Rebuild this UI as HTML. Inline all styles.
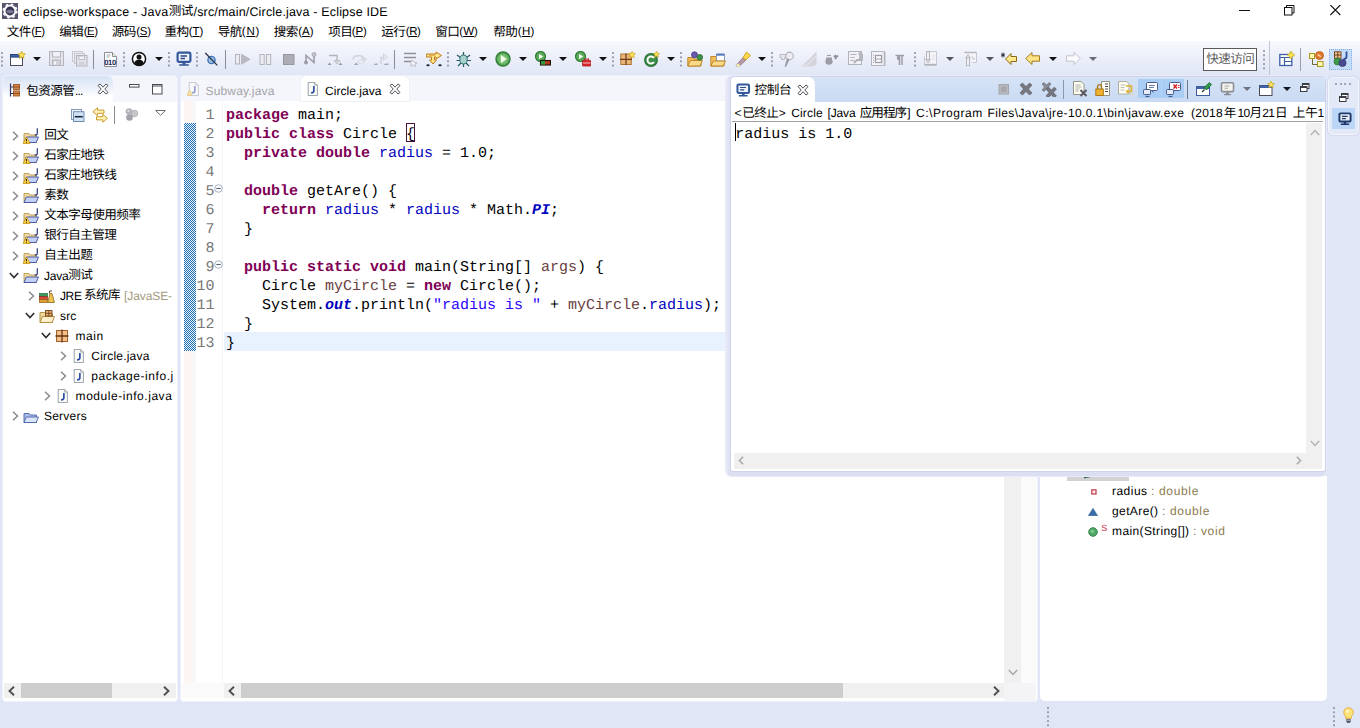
<!DOCTYPE html>
<html lang="zh"><head><meta charset="utf-8"><title>eclipse-workspace - Java测试/src/main/Circle.java - Eclipse IDE</title>
<style>
html,body{margin:0;padding:0}
body{width:1360px;height:728px;overflow:hidden;position:relative;background:#e1e6f6;font-family:"Liberation Sans",sans-serif;font-size:12px;text-rendering:geometricPrecision;-webkit-font-smoothing:antialiased}
.a{position:absolute;display:block;white-space:pre}
.s{font-family:"Liberation Sans",sans-serif}
.m{font-family:"Liberation Mono",monospace}
.k{font-family:"Liberation Sans","Noto Sans CJK SC",sans-serif;font-size:12.6px;line-height:12px;letter-spacing:-0.6px;color:#000}
u{text-decoration:underline}
</style></head>
<body>
<div class="a" style="left:0px;top:0px;width:1360px;height:41px;background:#fff;"></div>
<svg class="a" style="left:2px;top:3px;" width="16" height="16" viewBox="0 0 16 16"><rect x="0" y="0" width="16" height="16" fill="#57556e"/><circle cx="8" cy="8" r="6.5" fill="#f6f6fb" stroke="#f6f6fb" stroke-width="2.2" stroke-dasharray="2.5 2.6"/><circle cx="8" cy="8" r="4.4" fill="#34324c"/><ellipse cx="8" cy="8.6" rx="3.4" ry="2" fill="#6e6c88"/><path d="M4.600 8.600h6.800" stroke="#8c8aa4" stroke-width="0.700"/></svg>
<span class="a s" style="left:23px;top:5px;font-size:12.5px;line-height:14px;color:#000;letter-spacing:0.207px;">eclipse-workspace - Java</span>
<span class="a k" style="left:168.70px;top:4.70px;">测试</span>
<span class="a s" style="left:193.5px;top:5px;font-size:12.5px;line-height:14px;color:#000;letter-spacing:0.173px;">/src/main/Circle.java - Eclipse IDE</span>
<svg class="a" style="left:1238.5px;top:10px;" width="12" height="2" viewBox="0 0 12 2"><path d="M0 0.500h11" stroke="#111" stroke-width="1"/></svg>
<svg class="a" style="left:1284px;top:5px;" width="11" height="11" viewBox="0 0 11 11"><path d="M2.500 2.500v-2h7.500v7.500h-2" fill="none" stroke="#111"/><rect x="0.500" y="2.500" width="7.500" height="7.500" fill="none" stroke="#111"/></svg>
<svg class="a" style="left:1330px;top:5px;" width="11" height="11" viewBox="0 0 11 11"><path d="M0.300 0l10 10M10.300 0l-10 10" stroke="#111" stroke-width="1.100"/></svg>
<span class="a k" style="left:6.70px;top:26.00px;">文件</span>
<span class="a s" style="left:31.3px;top:26px;font-size:11.5px;line-height:12px;color:#000;letter-spacing:-0.496px;">(<u>F</u>)</span>
<span class="a k" style="left:59.20px;top:26.00px;">编辑</span>
<span class="a s" style="left:83.8px;top:26px;font-size:11.5px;line-height:12px;color:#000;letter-spacing:-0.548px;">(<u>E</u>)</span>
<span class="a k" style="left:111.70px;top:26.00px;">源码</span>
<span class="a s" style="left:136.3px;top:26px;font-size:11.5px;line-height:12px;color:#000;letter-spacing:-0.281px;">(<u>S</u>)</span>
<span class="a k" style="left:164.40px;top:26.00px;">重构</span>
<span class="a s" style="left:188.70000000000002px;top:26px;font-size:11.5px;line-height:12px;color:#000;letter-spacing:-0.029px;">(<u>T</u>)</span>
<span class="a k" style="left:217.70px;top:26.00px;">导航</span>
<span class="a s" style="left:241.8px;top:26px;font-size:11.5px;line-height:12px;color:#000;letter-spacing:0.744px;">(<u>N</u>)</span>
<span class="a k" style="left:273.70px;top:26.00px;">搜索</span>
<span class="a s" style="left:298.3px;top:26px;font-size:11.5px;line-height:12px;color:#000;letter-spacing:-0.048px;">(<u>A</u>)</span>
<span class="a k" style="left:328.20px;top:26.00px;">项目</span>
<span class="a s" style="left:351.8px;top:26px;font-size:11.5px;line-height:12px;color:#000;letter-spacing:-0.215px;">(<u>P</u>)</span>
<span class="a k" style="left:381.20px;top:26.00px;">运行</span>
<span class="a s" style="left:405.8px;top:26px;font-size:11.5px;line-height:12px;color:#000;letter-spacing:-0.423px;">(<u>R</u>)</span>
<span class="a k" style="left:435.20px;top:26.00px;">窗口</span>
<span class="a s" style="left:459.3px;top:26px;font-size:11.5px;line-height:12px;color:#000;letter-spacing:0.061px;">(<u>W</u>)</span>
<span class="a k" style="left:493.20px;top:26.00px;">帮助</span>
<span class="a s" style="left:517.8px;top:26px;font-size:11.5px;line-height:12px;color:#000;letter-spacing:0.244px;">(<u>H</u>)</span>
<div class="a" style="left:0px;top:41px;width:1360px;height:35px;background:linear-gradient(#f7f8fd 0%,#eef1fa 40%,#e3e8f7 85%,#e1e6f6 100%);"></div>
<svg class="a" style="left:1px;top:52px;" width="2" height="17" viewBox="0 0 2 17"><rect x="0" y="0.00" width="2" height="2" rx="0.5" fill="#989cae"/><rect x="0" y="4.15" width="2" height="2" rx="0.5" fill="#989cae"/><rect x="0" y="8.30" width="2" height="2" rx="0.5" fill="#989cae"/><rect x="0" y="12.45" width="2" height="2" rx="0.5" fill="#989cae"/></svg>
<svg class="a" style="left:10px;top:51px;" width="16" height="16" viewBox="0 0 16 16"><rect x="0.5" y="3.5" width="12" height="11" fill="#fff" stroke="#4a4a5a"/><rect x="0.5" y="3.5" width="12" height="2.6" fill="#3e62a8" stroke="#2c4478"/><path d="M11.7 0.3l1.1 2.3 2.6 0.3-1.9 1.8 0.5 2.6-2.3-1.3-2.3 1.3 0.5-2.6-1.9-1.8 2.6-0.3z" fill="#ffe25a" stroke="#c8a21a" stroke-width="0.8"/></svg>
<svg class="a" style="left:32.5px;top:57px;" width="8" height="4" viewBox="0 0 8 4"><path d="M0 0h8l-4 4z" fill="#111"/></svg>
<svg class="a" style="left:49px;top:51px;" width="16" height="16" viewBox="0 0 16 16"><rect x="0.5" y="0.5" width="14" height="14" fill="#e4e4ea" stroke="#b4b4bc"/><rect x="3.5" y="0.5" width="8" height="5.5" fill="#f2f2f6" stroke="#b4b4bc"/><rect x="3.5" y="9" width="8" height="5.5" fill="#d2d2da" stroke="#b4b4bc"/><rect x="5" y="10.5" width="2" height="3" fill="#f4f4f8"/></svg>
<svg class="a" style="left:72px;top:51px;" width="16" height="16" viewBox="0 0 16 16"><rect x="0.5" y="0.5" width="10" height="10" fill="#ececf1" stroke="#c8c8cf"/><rect x="2.5" y="2.5" width="10" height="10" fill="#e8e8ee" stroke="#c8c8cf"/><rect x="4.5" y="4.5" width="10.5" height="10.5" fill="#e2e2e9" stroke="#b4b4bc"/><rect x="7" y="5" width="5.5" height="3.6" fill="#f4f4f7" stroke="#b4b4bc" stroke-width="0.8"/><rect x="7" y="11" width="5.5" height="4" fill="#d0d0d8"/></svg>
<div class="a" style="left:93px;top:50px;width:1px;height:19px;background:#8c8c96;"></div>
<svg class="a" style="left:103px;top:51px;" width="16" height="16" viewBox="0 0 16 16"><path d="M1.5 1.5h8l4 4v10h-12z" fill="#fff" stroke="#8c8c98"/><path d="M9.500 1.500v4h4" fill="#eef0dc" stroke="#8c8c98"/><path d="M3.500 4h4M3.500 6h3" stroke="#9aa" stroke-width="1"/><text x="1.2" y="14.2" font-family="Liberation Sans" font-weight="700" font-size="7.6" fill="#1c2a5a" letter-spacing="-0.3">010</text></svg>
<svg class="a" style="left:123px;top:52px;" width="2" height="17" viewBox="0 0 2 17"><rect x="0" y="0.00" width="2" height="2" rx="0.5" fill="#989cae"/><rect x="0" y="4.15" width="2" height="2" rx="0.5" fill="#989cae"/><rect x="0" y="8.30" width="2" height="2" rx="0.5" fill="#989cae"/><rect x="0" y="12.45" width="2" height="2" rx="0.5" fill="#989cae"/></svg>
<svg class="a" style="left:131px;top:51px;" width="16" height="16" viewBox="0 0 16 16"><circle cx="8" cy="8" r="6.6" fill="#fff" stroke="#111" stroke-width="1.5"/><circle cx="8" cy="6" r="2.5" fill="#111"/><path d="M3.2 12.4c0.6-3 2.600-4 4.800-4s4.200 1 4.800 4c-1.300 1.600-3 2.200-4.800 2.200s-3.500-0.600-4.800-2.200z" fill="#111"/></svg>
<svg class="a" style="left:154.5px;top:57px;" width="8" height="4" viewBox="0 0 8 4"><path d="M0 0h8l-4 4z" fill="#111"/></svg>
<svg class="a" style="left:168px;top:52px;" width="2" height="17" viewBox="0 0 2 17"><rect x="0" y="0.00" width="2" height="2" rx="0.5" fill="#989cae"/><rect x="0" y="4.15" width="2" height="2" rx="0.5" fill="#989cae"/><rect x="0" y="8.30" width="2" height="2" rx="0.5" fill="#989cae"/><rect x="0" y="12.45" width="2" height="2" rx="0.5" fill="#989cae"/></svg>
<svg class="a" style="left:176px;top:51px;" width="16" height="16" viewBox="0 0 16 16"><rect x="1.6" y="1.6" width="12.8" height="9.3" rx="1.3" fill="#eef2fb" stroke="#33589b" stroke-width="2.2"/><path d="M4.500 5h6.500M4.500 7.500h4.500" stroke="#2a4a88" stroke-width="1.3"/><path d="M6.500 11.500h3v1.700h3.300v1.600h-9.600v-1.600h3.300z" fill="#33589b"/></svg>
<svg class="a" style="left:196px;top:52px;" width="2" height="17" viewBox="0 0 2 17"><rect x="0" y="0.00" width="2" height="2" rx="0.5" fill="#989cae"/><rect x="0" y="4.15" width="2" height="2" rx="0.5" fill="#989cae"/><rect x="0" y="8.30" width="2" height="2" rx="0.5" fill="#989cae"/><rect x="0" y="12.45" width="2" height="2" rx="0.5" fill="#989cae"/></svg>
<svg class="a" style="left:203px;top:51px;" width="16" height="16" viewBox="0 0 16 16"><circle cx="8.5" cy="9" r="3.6" fill="#9dbfe4" stroke="#3f78b6" stroke-width="1.4"/><path d="M2.300 2l12 12.400" stroke="#28344e" stroke-width="1.3"/></svg>
<div class="a" style="left:225px;top:50px;width:1px;height:19px;background:#8c8c96;"></div>
<svg class="a" style="left:235px;top:51px;" width="16" height="16" viewBox="0 0 16 16"><rect x="0.5" y="3.5" width="4" height="9.5" fill="#ececf2" stroke="#b4b4bc"/><path d="M6.500 3.300l8.500 5-8.500 5z" fill="#b9b9c2" stroke="#b4b4bc" stroke-width="0.8"/></svg>
<svg class="a" style="left:257px;top:51px;" width="16" height="16" viewBox="0 0 16 16"><rect x="3" y="3.5" width="4.2" height="10" fill="#ececf2" stroke="#b4b4bc"/><rect x="9.5" y="3.5" width="4.2" height="10" fill="#ececf2" stroke="#b4b4bc"/></svg>
<svg class="a" style="left:281px;top:51px;" width="16" height="16" viewBox="0 0 16 16"><rect x="2.5" y="3.5" width="10.5" height="10" fill="#acacb4" stroke="#96969f"/></svg>
<svg class="a" style="left:303px;top:51px;" width="16" height="16" viewBox="0 0 16 16"><path d="M3 11V4.500l8 7V3.500" fill="none" stroke="#9c9ca6" stroke-width="1.6"/><circle cx="3" cy="11.5" r="2" fill="#9c9ca6"/><circle cx="11" cy="3.5" r="2" fill="#c6c6ce" stroke="#9c9ca6" stroke-width="0.8"/></svg>
<svg class="a" style="left:326.5px;top:51px;" width="16" height="16" viewBox="0 0 16 16"><path d="M2 4.500h8v6" fill="none" stroke="#b4b4bc" stroke-width="1.3"/><path d="M7 9.500h6l-3 3.500z" fill="#d4d4da" stroke="#b4b4bc" stroke-width="0.7"/><path d="M0.500 14l2-2.500 2 2.500zM11.500 14l2-2.500 2 2.500z" fill="#9a9aa4"/></svg>
<svg class="a" style="left:350.5px;top:51px;" width="16" height="16" viewBox="0 0 16 16"><path d="M2 8.500c0-5 11-5 11 0" fill="none" stroke="#d2d2da" stroke-width="1.3"/><path d="M10.500 7.500h5l-2.500 3.500z" fill="#e0e0e6" stroke="#d0d0d8" stroke-width="0.7"/><path d="M3 14l2.200-2.500 2.200 2.500z" fill="#a6a6b0"/><ellipse cx="10" cy="11" rx="3" ry="2" fill="none" stroke="#dcdce2"/></svg>
<svg class="a" style="left:373px;top:51px;" width="16" height="16" viewBox="0 0 16 16"><path d="M8 13V6.500h5" fill="none" stroke="#d0d0d8" stroke-width="1.3"/><path d="M10.500 2.500l4 3.500-4 3.500z" fill="#e4e4ea" stroke="#d0d0d8" stroke-width="0.7"/><path d="M0.500 14h4v-1.500h-2zM10.500 14h5v-1.500h-3z" fill="#a6a6b0"/></svg>
<div class="a" style="left:394px;top:50px;width:1px;height:19px;background:#8c8c96;"></div>
<svg class="a" style="left:403px;top:51px;" width="16" height="16" viewBox="0 0 16 16"><path d="M1 2.500h12M1 6.500h12M1 10.500h9" stroke="#8f8f9a" stroke-width="1.7"/><path d="M8 9.500l6 2.500-2.500 1 1.500 2.500-1.500 0.700-1.500-2.500-2 1.500z" fill="#fbfbfd" stroke="#a8a8b2" stroke-width="0.7"/></svg>
<svg class="a" style="left:426px;top:51px;" width="16" height="16" viewBox="0 0 16 16"><path d="M0.500 3h9.500v-2l5.500 3.500-5.500 3.500v-2h-1.500v3h2l-3.500 4-3.500-4h2v-3h-5.500z" fill="#ffe68a" stroke="#bf7a16" stroke-width="1"/><path d="M3 4.200h6" stroke="#c88a20" stroke-width="0.8"/><ellipse cx="2" cy="14.2" rx="1.7" ry="1" fill="#1c1c34"/><ellipse cx="14" cy="14.2" rx="1.7" ry="1" fill="#1c1c34"/></svg>
<svg class="a" style="left:447px;top:52px;" width="2" height="17" viewBox="0 0 2 17"><rect x="0" y="0.00" width="2" height="2" rx="0.5" fill="#989cae"/><rect x="0" y="4.15" width="2" height="2" rx="0.5" fill="#989cae"/><rect x="0" y="8.30" width="2" height="2" rx="0.5" fill="#989cae"/><rect x="0" y="12.45" width="2" height="2" rx="0.5" fill="#989cae"/></svg>
<svg class="a" style="left:456px;top:51px;" width="16" height="16" viewBox="0 0 16 16"><g stroke="#275a62" stroke-width="1.2" fill="none"><path d="M7.500 1v4M1 4l4 3M14 4l-4 3M0.500 9.500h4M10.500 9.500h4.500M2 15l3.500-3.500M13 15l-3.500-3.500M7.500 12v4"/></g><ellipse cx="7.5" cy="8.5" rx="3.7" ry="4.5" fill="#a5d3cb" stroke="#2f6e74" stroke-width="1"/></svg>
<svg class="a" style="left:478.5px;top:57px;" width="8" height="4" viewBox="0 0 8 4"><path d="M0 0h8l-4 4z" fill="#111"/></svg>
<svg class="a" style="left:495px;top:51px;" width="16" height="16" viewBox="0 0 16 16"><circle cx="8" cy="8" r="7" fill="#5aa85a" stroke="#2f7d36" stroke-width="1.4"/><circle cx="8" cy="8" r="5" fill="#74bd6e"/><path d="M5.800 3.800l6 4.200-6 4.200z" fill="#f2faea"/></svg>
<svg class="a" style="left:518.5px;top:57px;" width="8" height="4" viewBox="0 0 8 4"><path d="M0 0h8l-4 4z" fill="#111"/></svg>
<svg class="a" style="left:534.5px;top:51px;" width="16" height="16" viewBox="0 0 16 16"><circle cx="5.5" cy="5.5" r="5" fill="#5aa85a" stroke="#2f7d36" stroke-width="1.2"/><path d="M4 2.800l4.300 2.700-4.300 2.700z" fill="#f2faea"/><rect x="5.5" y="9.5" width="10" height="4.5" fill="#b03a1a" stroke="#1a1208" stroke-width="1.1"/><rect x="6" y="10" width="4" height="3.5" fill="#2f9a3a"/></svg>
<svg class="a" style="left:558.5px;top:57px;" width="8" height="4" viewBox="0 0 8 4"><path d="M0 0h8l-4 4z" fill="#111"/></svg>
<svg class="a" style="left:574.5px;top:51px;" width="16" height="16" viewBox="0 0 16 16"><circle cx="5.5" cy="5.5" r="5" fill="#5aa85a" stroke="#2f7d36" stroke-width="1.2"/><path d="M4 2.800l4.300 2.700-4.300 2.700z" fill="#f2faea"/><rect x="7.5" y="9.5" width="8.5" height="5.5" rx="0.8" fill="#d9262c" stroke="#b01a20" stroke-width="0.8"/><path d="M10 9.500v-1.500h3.500v1.500" fill="none" stroke="#c01c22" stroke-width="1.2"/><path d="M8 12h7.500" stroke="#f6c0c0" stroke-width="1"/></svg>
<svg class="a" style="left:598.5px;top:57px;" width="8" height="4" viewBox="0 0 8 4"><path d="M0 0h8l-4 4z" fill="#111"/></svg>
<svg class="a" style="left:612px;top:52px;" width="2" height="17" viewBox="0 0 2 17"><rect x="0" y="0.00" width="2" height="2" rx="0.5" fill="#989cae"/><rect x="0" y="4.15" width="2" height="2" rx="0.5" fill="#989cae"/><rect x="0" y="8.30" width="2" height="2" rx="0.5" fill="#989cae"/><rect x="0" y="12.45" width="2" height="2" rx="0.5" fill="#989cae"/></svg>
<svg class="a" style="left:620px;top:51px;" width="16" height="16" viewBox="0 0 16 16"><rect x="0.8" y="3" width="10.5" height="10.5" fill="#e9b475" stroke="#b0773a" stroke-width="1"/><path d="M6 2.500v11.500M0 8.300h12" stroke="#6a3a18" stroke-width="1.2"/><path d="M12 0.300l1 2.100 2.400 0.300-1.700 1.700 0.400 2.400-2.100-1.200-2.100 1.200 0.400-2.400-1.700-1.700 2.400-0.300z" fill="#ffe25a" stroke="#c8a21a" stroke-width="0.7"/></svg>
<svg class="a" style="left:644px;top:51px;" width="16" height="16" viewBox="0 0 16 16"><circle cx="7" cy="9" r="6.3" fill="#3f8f4a" stroke="#2b6f38" stroke-width="1.2"/><path d="M10 6.800c-0.800-0.900-1.800-1.300-3-1.300-2 0-3.500 1.500-3.500 3.500s1.500 3.500 3.500 3.500c1.200 0 2.200-0.400 3-1.300" fill="none" stroke="#fff" stroke-width="1.9"/><path d="M12.500 0.300l0.900 1.900 2.200 0.300-1.600 1.500 0.400 2.200-1.900-1.100-1.900 1.100 0.400-2.200-1.600-1.500 2.200-0.300z" fill="#ffe25a" stroke="#c8a21a" stroke-width="0.7"/></svg>
<svg class="a" style="left:666.5px;top:57px;" width="8" height="4" viewBox="0 0 8 4"><path d="M0 0h8l-4 4z" fill="#111"/></svg>
<svg class="a" style="left:680px;top:52px;" width="2" height="17" viewBox="0 0 2 17"><rect x="0" y="0.00" width="2" height="2" rx="0.5" fill="#989cae"/><rect x="0" y="4.15" width="2" height="2" rx="0.5" fill="#989cae"/><rect x="0" y="8.30" width="2" height="2" rx="0.5" fill="#989cae"/><rect x="0" y="12.45" width="2" height="2" rx="0.5" fill="#989cae"/></svg>
<svg class="a" style="left:687px;top:51px;" width="16" height="16" viewBox="0 0 16 16"><path d="M0.800 6.500h5l1.200 1.500h7v7h-13.200z" fill="#f3bf5c" stroke="#b9801e" stroke-width="0.9"/><path d="M0.800 15l2.500-5.500h12.200l-2.500 5.500z" fill="#fbd98a" stroke="#b9801e" stroke-width="0.9"/><circle cx="7.5" cy="3.8" r="3" fill="#6a58ad" stroke="#4a3a8a" stroke-width="0.8"/><circle cx="12.8" cy="6.3" r="2.8" fill="#3d9148" stroke="#2a6a34" stroke-width="0.8"/></svg>
<svg class="a" style="left:710px;top:51px;" width="16" height="16" viewBox="0 0 16 16"><path d="M0.800 5.500h5l1.200 1.500h7v8h-13.200z" fill="#f3bf5c" stroke="#b9801e" stroke-width="0.9"/><rect x="6.5" y="3.5" width="8" height="6.5" fill="#fff" stroke="#7a88b0" stroke-width="0.8"/><rect x="6.5" y="2.5" width="8" height="2.2" fill="#5a78c0"/><path d="M0.800 15l2.500-5h12.200l-2.500 5z" fill="#fbd98a" stroke="#b9801e" stroke-width="0.9"/></svg>
<svg class="a" style="left:735px;top:51px;" width="16" height="16" viewBox="0 0 16 16"><path d="M1 14.500l7-8 3 2.500-7.500 7z" fill="#b89aa8" stroke="#8a7a86" stroke-width="0.8"/><path d="M8 6.500l3.500-5.500 4 3.500-4.500 4.500z" fill="#ffd84a" stroke="#c9a020" stroke-width="0.9"/><path d="M1 14.500l2-2 2.300 2.200-1.800 1.300z" fill="#fff6b0"/></svg>
<svg class="a" style="left:757.5px;top:57px;" width="8" height="4" viewBox="0 0 8 4"><path d="M0 0h8l-4 4z" fill="#111"/></svg>
<svg class="a" style="left:771px;top:52px;" width="2" height="17" viewBox="0 0 2 17"><rect x="0" y="0.00" width="2" height="2" rx="0.5" fill="#989cae"/><rect x="0" y="4.15" width="2" height="2" rx="0.5" fill="#989cae"/><rect x="0" y="8.30" width="2" height="2" rx="0.5" fill="#989cae"/><rect x="0" y="12.45" width="2" height="2" rx="0.5" fill="#989cae"/></svg>
<svg class="a" style="left:779px;top:51px;" width="16" height="16" viewBox="0 0 16 16"><path d="M1 3.500h6v3h-1.500v2h-3v-2h-1.500z" fill="#e8e8ee" stroke="#b4b4bc" stroke-width="0.9"/><circle cx="10.5" cy="5" r="3.8" fill="#ececf2" stroke="#b4b4bc" stroke-width="1.2"/><path d="M8 7l-2.500 9 1.800-0.500 3.200-7z" fill="#9c9ca6"/></svg>
<svg class="a" style="left:801px;top:51px;" width="16" height="16" viewBox="0 0 16 16"><path d="M0.500 15.500l15-15v12.500l-3 2.500z" fill="#d3d3d9"/><path d="M0.500 15.500l6-2 9-9" fill="none" stroke="#e2e2e8" stroke-width="1.2"/></svg>
<svg class="a" style="left:824px;top:51px;" width="16" height="16" viewBox="0 0 16 16"><ellipse cx="5" cy="10.5" rx="3.6" ry="3.2" fill="#9c9ca6"/><path d="M2 6.500h6v2h-6z" fill="#9c9ca6"/><path d="M3 4.500h4" stroke="#9c9ca6" stroke-width="1.2"/><path d="M9.500 5l2-1.500 1 1.200 1.500-1 0.500 2.300-2.300 0.500 0.800 1.200-1.800 0.800z" fill="#8e8e98"/></svg>
<svg class="a" style="left:848px;top:51px;" width="16" height="16" viewBox="0 0 16 16"><rect x="0.5" y="0.5" width="13" height="13" fill="#f1f1f5" stroke="#b4b4bc"/><path d="M2.500 3.500h6M2.500 6.500h4M2.500 9.500h4" stroke="#b4b4bc" stroke-width="1.2"/><path d="M12 1v8h-3l-3 3" fill="none" stroke="#9c9ca6" stroke-width="1.3"/><path d="M10 3h4.500v6.500h-4" fill="none" stroke="#b4b4bc"/></svg>
<svg class="a" style="left:871px;top:51px;" width="16" height="16" viewBox="0 0 16 16"><rect x="0.5" y="0.5" width="13" height="14" fill="#f3f3f7" stroke="#b4b4bc"/><rect x="4.5" y="4.5" width="6" height="7" fill="#fafafc" stroke="#9c9ca6" stroke-width="1.2"/><path d="M5 8h5M2 4h1M2 6.500h1M2 9h1M2 11.500h1" stroke="#9c9ca6"/><path d="M12 0v15M14.500 1v14" stroke="#d4d4dc"/></svg>
<svg class="a" style="left:893px;top:51px;" width="16" height="16" viewBox="0 0 16 16"><path d="M9 4.500v9.500M6.500 4.500v9.500" stroke="#9c9ca6" stroke-width="1.5"/><path d="M2.500 4.500h8.500" stroke="#9c9ca6" stroke-width="1.4"/><path d="M6.500 4.500c-3.500 0-3.500 5 0 5z" fill="#9c9ca6"/></svg>
<svg class="a" style="left:914px;top:52px;" width="2" height="17" viewBox="0 0 2 17"><rect x="0" y="0.00" width="2" height="2" rx="0.5" fill="#989cae"/><rect x="0" y="4.15" width="2" height="2" rx="0.5" fill="#989cae"/><rect x="0" y="8.30" width="2" height="2" rx="0.5" fill="#989cae"/><rect x="0" y="12.45" width="2" height="2" rx="0.5" fill="#989cae"/></svg>
<svg class="a" style="left:923px;top:51px;" width="16" height="16" viewBox="0 0 16 16"><path d="M4.500 0.500h9v14h-12v-9" fill="#f4f4f8" stroke="#c8c8cf"/><rect x="3.5" y="0.5" width="3" height="8" fill="#f0f0f5" stroke="#b4b4bc"/><path d="M2.500 8.500h5l-2.500 3.500z" fill="#dadae0" stroke="#b4b4bc" stroke-width="0.8"/><path d="M1.500 13.500h12" stroke="#b4b4bc" stroke-width="1.4"/><path d="M9 5h3M9 8h3" stroke="#dcdce4"/></svg>
<svg class="a" style="left:945.5px;top:57px;" width="8" height="4" viewBox="0 0 8 4"><path d="M0 0h8l-4 4z" fill="#55555f"/></svg>
<svg class="a" style="left:963px;top:51px;" width="16" height="16" viewBox="0 0 16 16"><path d="M1.500 1.500h12v10h-4" fill="#f4f4f8" stroke="#c8c8cf"/><path d="M1.500 1.500h12" stroke="#b4b4bc" stroke-width="1.4"/><rect x="3.5" y="6.5" width="3" height="8" fill="#f0f0f5" stroke="#b4b4bc"/><path d="M2.500 7l2.500-3.500 2.500 3.500z" fill="#dadae0" stroke="#b4b4bc" stroke-width="0.8"/><path d="M9 5l2 3M9 8h3" stroke="#c8c8d0"/></svg>
<svg class="a" style="left:985.5px;top:57px;" width="8" height="4" viewBox="0 0 8 4"><path d="M0 0h8l-4 4z" fill="#55555f"/></svg>
<svg class="a" style="left:1001px;top:51px;" width="16" height="16" viewBox="0 0 16 16"><path d="M2 1.500v5M0 2.800l4 2.500M4 2.800l-4 2.500" stroke="#2a2a3a" stroke-width="1"/><path d="M4.500 8l5.500-5.500v3h5.500v5h-5.500v3z" fill="#ffe98c" stroke="#8a6a1a" stroke-width="1"/></svg>
<svg class="a" style="left:1025px;top:51px;" width="16" height="16" viewBox="0 0 16 16"><path d="M0.700 7.500l6.300-6v3.300h7.500v5.400h-7.500v3.300z" fill="#ffe487" stroke="#a07c22" stroke-width="1"/></svg>
<svg class="a" style="left:1048.5px;top:57px;" width="8" height="4" viewBox="0 0 8 4"><path d="M0 0h8l-4 4z" fill="#111"/></svg>
<svg class="a" style="left:1065px;top:51px;" width="16" height="16" viewBox="0 0 16 16"><path d="M15.300 7.500l-6.300-6v3.300h-7.500v5.400h7.500v3.300z" fill="#fbfbfd" stroke="#c2c2cc" stroke-width="1"/></svg>
<svg class="a" style="left:1088.5px;top:57px;" width="8" height="4" viewBox="0 0 8 4"><path d="M0 0h8l-4 4z" fill="#6c6c78"/></svg>
<div class="a" style="left:1203px;top:48px;width:54px;height:23px;background:#fff;box-sizing:border-box;border:1px solid #5a5a5a;"></div>
<span class="a k" style="left:1206.20px;top:53.00px;color:#5c5c5c;">快速访问</span>
<svg class="a" style="left:1263px;top:50px;" width="2" height="22" viewBox="0 0 2 22"><rect x="0" y="0.00" width="2" height="2" rx="0.5" fill="#989cae"/><rect x="0" y="4.30" width="2" height="2" rx="0.5" fill="#989cae"/><rect x="0" y="8.60" width="2" height="2" rx="0.5" fill="#989cae"/><rect x="0" y="12.90" width="2" height="2" rx="0.5" fill="#989cae"/><rect x="0" y="17.20" width="2" height="2" rx="0.5" fill="#989cae"/></svg>
<div class="a" style="left:1269px;top:41px;width:1px;height:34px;background:#c2c6d6;"></div>
<svg class="a" style="left:1279px;top:51px;" width="16" height="16" viewBox="0 0 16 16"><rect x="0.8" y="3.5" width="12" height="11" fill="#fff" stroke="#3f5fa5" stroke-width="1.3"/><path d="M0.800 6.500h12M5.500 6.500v8M5.500 10.500h7.500" stroke="#3f5fa5" stroke-width="1.2"/><path d="M12 0.500v7M8.500 4h7" stroke="#c9a010" stroke-width="2.6"/><path d="M12 1.200v5.600M9.200 4h5.600" stroke="#ffee5a" stroke-width="1.3"/></svg>
<div class="a" style="left:1300px;top:48px;width:1px;height:23px;background:#9a9eae;"></div>
<svg class="a" style="left:1309px;top:51px;" width="16" height="16" viewBox="0 0 16 16"><path d="M3.500 6v7.500h6" fill="none" stroke="#6a6a3a" stroke-width="1"/><rect x="0.5" y="2.5" width="5" height="5" fill="#fff7b0" stroke="#a89a20"/><rect x="8.5" y="10.5" width="5.5" height="5" fill="#fff7b0" stroke="#a89a20"/><circle cx="10.5" cy="4.5" r="4" fill="#e0782a" stroke="#b85a18" stroke-width="0.8"/><path d="M8.800 3.500l3 2.300" stroke="#ffe0b0" stroke-width="1.3"/></svg>
<div class="a" style="left:1329px;top:49px;width:23px;height:21px;background:#c5ddf8;box-sizing:border-box;border:1px dotted #86aee6;"></div>
<svg class="a" style="left:1333px;top:51px;" width="16" height="16" viewBox="0 0 16 16"><rect x="1.5" y="0.8" width="6.5" height="6.5" fill="#f0c890" stroke="#6a3a18" stroke-width="0.9"/><path d="M4.800 0.800v6.500M1.500 4h6.500" stroke="#6a3a18" stroke-width="1"/><path d="M13.500 0.500v5c0 2-1.500 2.500-3 2.500" fill="none" stroke="#2f4fa0" stroke-width="1.8"/><circle cx="4.5" cy="10.5" r="3.5" fill="#3d9a48" stroke="#2a6a34" stroke-width="0.7"/><circle cx="9.5" cy="12" r="3.6" fill="#4a4a90" stroke="#34346a" stroke-width="0.7"/></svg>
<div class="a" style="left:3px;top:76px;width:174px;height:625px;background:#fff;border-radius:4px 4px 3px 3px;box-shadow:0 0 0 1px #eef1fb;"></div>
<div class="a" style="left:3px;top:76px;width:174px;height:26px;background:#f4f6fc;border-radius:4px 4px 0 0;"></div>
<div class="a" style="left:3px;top:76px;width:110px;height:26px;border-radius:4px 6px 0 0;background:linear-gradient(#d8e3f4 0%,#eaf0fa 45%,#fff 82%);"></div>
<svg class="a" style="left:9px;top:82px;" width="16" height="16" viewBox="0 0 16 16"><path d="M1.500 1.500v13" stroke="#3a3a5a" stroke-width="1.2"/><path d="M1.500 5h3M1.500 11.500h3" stroke="#3a3a5a"/><rect x="4.5" y="2.5" width="6" height="5" fill="#d98a4a" stroke="#8a4a1a" stroke-width="0.8"/><rect x="4.5" y="9" width="6" height="5" fill="#d98a4a" stroke="#8a4a1a" stroke-width="0.8"/><path d="M4.500 5h6M4.500 11.500h6" stroke="#7a3a10" stroke-width="0.8"/></svg>
<span class="a k" style="left:26.20px;top:84.50px;">包资源管</span>
<span class="a s" style="left:75px;top:84px;font-size:12px;line-height:14px;color:#000;letter-spacing:-0.839px;">...</span>
<svg class="a" style="left:95px;top:82px;" width="16" height="16" viewBox="0 0 16 16"><path d="M3 3.500l2-1.500 3 3.200 3-3.200 2 1.500-3.200 3.500 3.200 3.500-2 1.500-3-3.200-3 3.200-2-1.500 3.200-3.500z" fill="#fff" stroke="#53535b" stroke-width="1"/></svg>
<svg class="a" style="left:129px;top:84px;" width="11" height="4" viewBox="0 0 11 4"><rect x="0.5" y="0.5" width="9.5" height="2.6" fill="#fff" stroke="#4a4a52"/></svg>
<svg class="a" style="left:152px;top:84px;" width="11" height="11" viewBox="0 0 11 11"><rect x="0.5" y="0.5" width="9.5" height="9.5" fill="#fff" stroke="#4a4a52"/><path d="M0.500 2h9.500" stroke="#4a4a52"/></svg>
<svg class="a" style="left:70px;top:107px;" width="16" height="16" viewBox="0 0 16 16"><rect x="1.5" y="2.5" width="10" height="10" fill="#f4f8fc" stroke="#8298b4"/><rect x="3.5" y="4.7" width="10.5" height="9.8" fill="#cfe3f2" stroke="#6f8cb0"/><path d="M4.800 9.700h8" stroke="#14203c" stroke-width="1.5"/></svg>
<svg class="a" style="left:92px;top:107px;" width="16" height="16" viewBox="0 0 16 16"><path d="M0.800 4.700l4.700-3.900v2.300h6.500v3.200h-6.500v2.300z" fill="#fff2b8" stroke="#c4921c" stroke-width="0.9"/><path d="M15.500 11.300l-4.700-3.900v2.300h-6.300v3.200h6.300v2.300z" fill="#fff2b8" stroke="#c4921c" stroke-width="0.9"/></svg>
<div class="a" style="left:114px;top:106px;width:1px;height:18px;background:#8a8a92;"></div>
<svg class="a" style="left:124px;top:107px;" width="16" height="16" viewBox="0 0 16 16"><circle cx="5" cy="4.5" r="3.3" fill="#b4b4ba"/><circle cx="10.5" cy="6.5" r="3.3" fill="#c6c6cc" stroke="#a8a8b0" stroke-width="0.7"/><circle cx="5.5" cy="10.5" r="3.3" fill="#a2a2aa"/><circle cx="4.5" cy="4" r="1.2" fill="#dcdce0"/></svg>
<svg class="a" style="left:155px;top:110px;" width="11" height="6" viewBox="0 0 11 6"><path d="M0.600 0.500h9.800l-4.900 4.800z" fill="#fff" stroke="#6c6c74" stroke-width="1"/></svg>
<svg class="a" style="left:11.5px;top:130.5px;" width="7" height="10" viewBox="0 0 7 10"><path d="M1 0.800l4.500 4.200-4.500 4.200" fill="none" stroke="#8b8b90" stroke-width="1.500"/></svg>
<svg class="a" style="left:22.8px;top:127.5px;" width="16" height="16" viewBox="0 0 16 16"><path d="M1 5.500h5l1.200 1.500h6.300v7.500h-12.500z" fill="#f0d9a0" stroke="#b89a50" stroke-width="0.9"/><path d="M1 14.500l2.300-5.500h12.200l-2.300 5.500z" fill="#c3d0f6" stroke="#3c4f9c" stroke-width="0.9"/><path d="M14.300 0.300v5c0 1.400-0.800 1.900-2.600 1.500" fill="none" stroke="#27357c" stroke-width="1.2"/><path d="M3.500 9l3.500 6.500h-7z" fill="#ffd23a" stroke="#c8961a" stroke-width="0.8"/><path d="M3.500 11v2.300M3.500 14v0.800" stroke="#3a2a00" stroke-width="1"/></svg>
<span class="a k" style="left:44.20px;top:129.10px;">回文</span>
<svg class="a" style="left:11.5px;top:150.5px;" width="7" height="10" viewBox="0 0 7 10"><path d="M1 0.800l4.500 4.200-4.500 4.200" fill="none" stroke="#8b8b90" stroke-width="1.500"/></svg>
<svg class="a" style="left:22.8px;top:147.5px;" width="16" height="16" viewBox="0 0 16 16"><path d="M1 5.500h5l1.200 1.500h6.300v7.500h-12.500z" fill="#f0d9a0" stroke="#b89a50" stroke-width="0.9"/><path d="M1 14.500l2.300-5.500h12.200l-2.300 5.500z" fill="#c3d0f6" stroke="#3c4f9c" stroke-width="0.9"/><path d="M14.300 0.300v5c0 1.400-0.800 1.900-2.600 1.500" fill="none" stroke="#27357c" stroke-width="1.2"/><path d="M3.500 9l3.500 6.500h-7z" fill="#ffd23a" stroke="#c8961a" stroke-width="0.8"/><path d="M3.500 11v2.300M3.500 14v0.800" stroke="#3a2a00" stroke-width="1"/></svg>
<span class="a k" style="left:44.20px;top:149.10px;">石家庄地铁</span>
<svg class="a" style="left:11.5px;top:170.5px;" width="7" height="10" viewBox="0 0 7 10"><path d="M1 0.800l4.500 4.200-4.500 4.200" fill="none" stroke="#8b8b90" stroke-width="1.500"/></svg>
<svg class="a" style="left:22.8px;top:167.5px;" width="16" height="16" viewBox="0 0 16 16"><path d="M1 5.500h5l1.200 1.500h6.300v7.500h-12.500z" fill="#f0d9a0" stroke="#b89a50" stroke-width="0.9"/><path d="M1 14.500l2.300-5.500h12.200l-2.300 5.500z" fill="#c3d0f6" stroke="#3c4f9c" stroke-width="0.9"/><path d="M14.300 0.300v5c0 1.400-0.800 1.900-2.600 1.500" fill="none" stroke="#27357c" stroke-width="1.2"/><path d="M3.500 9l3.500 6.500h-7z" fill="#ffd23a" stroke="#c8961a" stroke-width="0.8"/><path d="M3.500 11v2.300M3.500 14v0.800" stroke="#3a2a00" stroke-width="1"/></svg>
<span class="a k" style="left:44.20px;top:169.10px;">石家庄地铁线</span>
<svg class="a" style="left:11.5px;top:190.5px;" width="7" height="10" viewBox="0 0 7 10"><path d="M1 0.800l4.500 4.200-4.500 4.200" fill="none" stroke="#8b8b90" stroke-width="1.500"/></svg>
<svg class="a" style="left:22.8px;top:187.5px;" width="16" height="16" viewBox="0 0 16 16"><path d="M1 5.500h5l1.200 1.500h6.300v7.500h-12.500z" fill="#f0d9a0" stroke="#b89a50" stroke-width="0.9"/><path d="M1 14.500l2.300-5.500h12.200l-2.300 5.500z" fill="#c3d0f6" stroke="#3c4f9c" stroke-width="0.9"/><path d="M14.300 0.300v5c0 1.400-0.800 1.900-2.600 1.500" fill="none" stroke="#27357c" stroke-width="1.2"/></svg>
<span class="a k" style="left:44.20px;top:189.10px;">素数</span>
<svg class="a" style="left:11.5px;top:210.5px;" width="7" height="10" viewBox="0 0 7 10"><path d="M1 0.800l4.500 4.200-4.500 4.200" fill="none" stroke="#8b8b90" stroke-width="1.500"/></svg>
<svg class="a" style="left:22.8px;top:207.5px;" width="16" height="16" viewBox="0 0 16 16"><path d="M1 5.500h5l1.200 1.500h6.300v7.500h-12.500z" fill="#f0d9a0" stroke="#b89a50" stroke-width="0.9"/><path d="M1 14.500l2.300-5.500h12.200l-2.300 5.500z" fill="#c3d0f6" stroke="#3c4f9c" stroke-width="0.9"/><path d="M14.300 0.300v5c0 1.400-0.800 1.900-2.600 1.500" fill="none" stroke="#27357c" stroke-width="1.2"/><path d="M3.500 9l3.500 6.500h-7z" fill="#ffd23a" stroke="#c8961a" stroke-width="0.8"/><path d="M3.500 11v2.300M3.500 14v0.800" stroke="#3a2a00" stroke-width="1"/></svg>
<span class="a k" style="left:44.20px;top:209.10px;">文本字母使用频率</span>
<svg class="a" style="left:11.5px;top:230.5px;" width="7" height="10" viewBox="0 0 7 10"><path d="M1 0.800l4.500 4.200-4.500 4.200" fill="none" stroke="#8b8b90" stroke-width="1.500"/></svg>
<svg class="a" style="left:22.8px;top:227.5px;" width="16" height="16" viewBox="0 0 16 16"><path d="M1 5.500h5l1.200 1.500h6.300v7.500h-12.500z" fill="#f0d9a0" stroke="#b89a50" stroke-width="0.9"/><path d="M1 14.500l2.300-5.500h12.200l-2.300 5.500z" fill="#c3d0f6" stroke="#3c4f9c" stroke-width="0.9"/><path d="M14.300 0.300v5c0 1.400-0.800 1.900-2.600 1.500" fill="none" stroke="#27357c" stroke-width="1.2"/><path d="M3.500 9l3.500 6.500h-7z" fill="#ffd23a" stroke="#c8961a" stroke-width="0.8"/><path d="M3.500 11v2.300M3.500 14v0.800" stroke="#3a2a00" stroke-width="1"/></svg>
<span class="a k" style="left:44.20px;top:229.10px;">银行自主管理</span>
<svg class="a" style="left:11.5px;top:250.5px;" width="7" height="10" viewBox="0 0 7 10"><path d="M1 0.800l4.500 4.200-4.500 4.200" fill="none" stroke="#8b8b90" stroke-width="1.500"/></svg>
<svg class="a" style="left:22.8px;top:247.5px;" width="16" height="16" viewBox="0 0 16 16"><path d="M1 5.500h5l1.200 1.500h6.300v7.500h-12.500z" fill="#f0d9a0" stroke="#b89a50" stroke-width="0.9"/><path d="M1 14.500l2.300-5.500h12.200l-2.300 5.500z" fill="#c3d0f6" stroke="#3c4f9c" stroke-width="0.9"/><path d="M14.300 0.300v5c0 1.400-0.800 1.900-2.600 1.500" fill="none" stroke="#27357c" stroke-width="1.2"/><path d="M3.500 9l3.500 6.500h-7z" fill="#ffd23a" stroke="#c8961a" stroke-width="0.8"/><path d="M3.500 11v2.300M3.500 14v0.800" stroke="#3a2a00" stroke-width="1"/></svg>
<span class="a k" style="left:44.20px;top:249.10px;">自主出题</span>
<svg class="a" style="left:9.0px;top:272.0px;" width="10" height="7" viewBox="0 0 10 7"><path d="M0.800 1l4.200 4.500 4.200-4.500" fill="none" stroke="#2c2c30" stroke-width="1.600"/></svg>
<svg class="a" style="left:22.8px;top:267.5px;" width="16" height="16" viewBox="0 0 16 16"><path d="M1 5.500h5l1.200 1.500h6.300v7.500h-12.500z" fill="#f0d9a0" stroke="#b89a50" stroke-width="0.9"/><path d="M1 14.500l2.300-5.500h12.200l-2.300 5.500z" fill="#c3d0f6" stroke="#3c4f9c" stroke-width="0.9"/><path d="M14.300 0.300v5c0 1.400-0.800 1.900-2.600 1.500" fill="none" stroke="#27357c" stroke-width="1.2"/></svg>
<span class="a s" style="left:44px;top:269px;font-size:12px;line-height:14px;color:#000;letter-spacing:-0.215px;">Java</span>
<span class="a k" style="left:68.20px;top:269.10px;">测试</span>
<svg class="a" style="left:27.7px;top:290.5px;" width="7" height="10" viewBox="0 0 7 10"><path d="M1 0.800l4.500 4.200-4.500 4.200" fill="none" stroke="#8b8b90" stroke-width="1.500"/></svg>
<svg class="a" style="left:39.0px;top:287.5px;" width="16" height="16" viewBox="0 0 16 16"><rect x="0.5" y="5.5" width="8" height="3" fill="#3a9a5a" stroke="#1e6a3a" stroke-width="0.7"/><rect x="0.5" y="8.5" width="8" height="3" fill="#d8483a" stroke="#8a2a1e" stroke-width="0.7"/><rect x="0.5" y="11.5" width="8" height="3" fill="#e0a030" stroke="#8a5a10" stroke-width="0.7"/><path d="M8.800 14.500l2.200-9 2 0 2.500 9z" fill="#f0c050" stroke="#8a6a20" stroke-width="0.8"/><path d="M10.500 5.500v-2.500h2.500" fill="none" stroke="#5a4a2a"/></svg>
<span class="a s" style="left:60px;top:289px;font-size:12px;line-height:14px;color:#000;letter-spacing:-0.391px;">JRE</span>
<span class="a k" style="left:84.00px;top:289.10px;">系统库</span>
<span class="a s" style="left:124px;top:289px;font-size:12px;line-height:14px;color:#a29a7c;letter-spacing:-0.086px;">[JavaSE-</span>
<svg class="a" style="left:25.2px;top:312.0px;" width="10" height="7" viewBox="0 0 10 7"><path d="M0.800 1l4.200 4.500 4.200-4.500" fill="none" stroke="#2c2c30" stroke-width="1.600"/></svg>
<svg class="a" style="left:39.0px;top:307.5px;" width="16" height="16" viewBox="0 0 16 16"><path d="M1 4.500h5l1.200 1.500h6.300v8.500h-12.500z" fill="#f0d9a0" stroke="#b08a3a" stroke-width="0.9"/><path d="M1 14.500l2.300-6h12.200l-2.300 6z" fill="#fbeec8" stroke="#b08a3a" stroke-width="0.9"/><rect x="6.5" y="2.5" width="6.5" height="5.5" fill="#e8b070" stroke="#6a3a18" stroke-width="0.8"/><path d="M9.800 2.500v5.500M6.500 5.300h6.500" stroke="#6a3a18" stroke-width="0.8"/></svg>
<span class="a s" style="left:60px;top:309px;font-size:12px;line-height:14px;color:#000;letter-spacing:0.167px;">src</span>
<svg class="a" style="left:41.4px;top:332.0px;" width="10" height="7" viewBox="0 0 10 7"><path d="M0.800 1l4.200 4.500 4.200-4.500" fill="none" stroke="#2c2c30" stroke-width="1.600"/></svg>
<svg class="a" style="left:55.2px;top:327.5px;" width="16" height="16" viewBox="0 0 16 16"><rect x="1.5" y="2.5" width="11" height="11" fill="#f0c088" stroke="#a0602a" stroke-width="1"/><path d="M7 1.500v13M0.500 8h13" stroke="#6a3414" stroke-width="1.3"/></svg>
<span class="a s" style="left:75.6px;top:329px;font-size:12px;line-height:14px;color:#000;letter-spacing:0.496px;">main</span>
<svg class="a" style="left:60.099999999999994px;top:350.5px;" width="7" height="10" viewBox="0 0 7 10"><path d="M1 0.800l4.500 4.200-4.500 4.200" fill="none" stroke="#8b8b90" stroke-width="1.500"/></svg>
<svg class="a" style="left:72.19999999999999px;top:348.5px;" width="14" height="14" viewBox="0 0 16 16"><path d="M2.500 0.500h7.500l3 3v12h-10.500z" fill="#fdfdf6" stroke="#7a8a9a" stroke-width="0.9"/><path d="M10 0.500v3h3" fill="#e8eadc" stroke="#7a8a9a" stroke-width="0.8"/><path d="M9 4.500v5.500c0 2-1.200 2.500-3.200 2.500" fill="none" stroke="#2a4aa8" stroke-width="1.9"/></svg>
<span class="a s" style="left:91.3px;top:349px;font-size:12px;line-height:14px;color:#000;letter-spacing:0.199px;">Circle.java</span>
<svg class="a" style="left:60.099999999999994px;top:370.5px;" width="7" height="10" viewBox="0 0 7 10"><path d="M1 0.800l4.500 4.200-4.500 4.200" fill="none" stroke="#8b8b90" stroke-width="1.500"/></svg>
<svg class="a" style="left:72.19999999999999px;top:368.5px;" width="14" height="14" viewBox="0 0 16 16"><path d="M2.500 0.500h7.500l3 3v12h-10.500z" fill="#fdfdf6" stroke="#7a8a9a" stroke-width="0.9"/><path d="M10 0.500v3h3" fill="#e8eadc" stroke="#7a8a9a" stroke-width="0.8"/><path d="M9 4.500v5.500c0 2-1.200 2.500-3.200 2.500" fill="none" stroke="#2a4aa8" stroke-width="1.9"/></svg>
<span class="a s" style="left:91.3px;top:369px;font-size:12px;line-height:14px;color:#000;letter-spacing:0.556px;">package-info.j</span>
<svg class="a" style="left:43.9px;top:390.5px;" width="7" height="10" viewBox="0 0 7 10"><path d="M1 0.800l4.500 4.200-4.500 4.200" fill="none" stroke="#8b8b90" stroke-width="1.500"/></svg>
<svg class="a" style="left:56.0px;top:388.5px;" width="14" height="14" viewBox="0 0 16 16"><path d="M2.500 0.500h7.500l3 3v12h-10.500z" fill="#fdfdf6" stroke="#7a8a9a" stroke-width="0.9"/><path d="M10 0.500v3h3" fill="#e8eadc" stroke="#7a8a9a" stroke-width="0.8"/><path d="M9 4.500v5.500c0 2-1.200 2.500-3.200 2.500" fill="none" stroke="#2a4aa8" stroke-width="1.9"/></svg>
<span class="a s" style="left:75.6px;top:389px;font-size:12px;line-height:14px;color:#000;letter-spacing:0.546px;">module-info.java</span>
<svg class="a" style="left:11.5px;top:410.5px;" width="7" height="10" viewBox="0 0 7 10"><path d="M1 0.800l4.500 4.200-4.500 4.200" fill="none" stroke="#8b8b90" stroke-width="1.500"/></svg>
<svg class="a" style="left:22.8px;top:407.5px;" width="16" height="16" viewBox="0 0 16 16"><path d="M1 5.500h5l1.200 1.500h6.300v7.500h-12.500z" fill="#a9bbe8" stroke="#4a64a8" stroke-width="0.9"/><path d="M1 14.500l2.300-5.500h12.200l-2.300 5.500z" fill="#dbe5fa" stroke="#4a64a8" stroke-width="0.9"/></svg>
<span class="a s" style="left:43.9px;top:409px;font-size:12px;line-height:14px;color:#000;letter-spacing:0.237px;">Servers</span>
<div class="a" style="left:4px;top:683px;width:172px;height:15px;background:#f0f0f0;"></div>
<div class="a" style="left:21px;top:683px;width:91px;height:15px;background:#cdcdcd;"></div>
<svg class="a" style="left:8px;top:686px;" width="8" height="10" viewBox="0 0 8 10"><path d="M6 0.800l-4.500 4.200 4.500 4.200" fill="none" stroke="#4e4e52" stroke-width="1.900"/></svg>
<svg class="a" style="left:162px;top:686px;" width="8" height="10" viewBox="0 0 8 10"><path d="M2 0.800l4.500 4.200-4.500 4.200" fill="none" stroke="#4e4e52" stroke-width="1.900"/></svg>
<div class="a" style="left:181px;top:76px;width:856px;height:625px;background:#fff;border-radius:4px 4px 3px 3px;box-shadow:0 0 0 1px #eef1fb;"></div>
<div class="a" style="left:181px;top:76px;width:856px;height:25px;background:#f5f6fb;border-radius:4px 4px 0 0;"></div>
<svg class="a" style="left:186.6px;top:82.2px;opacity:.5;" width="14" height="14" viewBox="0 0 16 16"><path d="M2.500 0.500h7.500l3 3v12h-10.500z" fill="#fdfdf6" stroke="#7a8a9a" stroke-width="0.9"/><path d="M10 0.500v3h3" fill="#e8eadc" stroke="#7a8a9a" stroke-width="0.8"/><path d="M9 4.500v5.500c0 2-1.200 2.500-3.200 2.500" fill="none" stroke="#2a4aa8" stroke-width="1.9"/><path d="M3 9l3 6.500h-6z" fill="#ffd23a" stroke="#c8961a" stroke-width="0.8"/></svg>
<span class="a s" style="left:205.5px;top:84px;font-size:12px;line-height:14px;color:#a3a3a8;letter-spacing:0.168px;">Subway.java</span>
<div class="a" style="left:301px;top:76px;width:108px;height:25px;background:#fff;border-radius:6px 6px 0 0;box-shadow:0 0 0 1px #eef0f8;"></div>
<svg class="a" style="left:305.8px;top:82.2px;" width="14" height="14" viewBox="0 0 16 16"><path d="M2.500 0.500h7.500l3 3v12h-10.500z" fill="#fdfdf6" stroke="#7a8a9a" stroke-width="0.9"/><path d="M10 0.500v3h3" fill="#e8eadc" stroke="#7a8a9a" stroke-width="0.8"/><path d="M9 4.500v5.500c0 2-1.200 2.500-3.200 2.500" fill="none" stroke="#2a4aa8" stroke-width="1.9"/></svg>
<span class="a s" style="left:325px;top:84px;font-size:12px;line-height:14px;color:#000;letter-spacing:0.044px;">Circle.java</span>
<svg class="a" style="left:387.3px;top:82px;" width="16" height="16" viewBox="0 0 16 16"><path d="M3 3.500l2-1.500 3 3.200 3-3.200 2 1.500-3.200 3.500 3.200 3.500-2 1.500-3-3.200-3 3.200-2-1.500 3.200-3.500z" fill="#fff" stroke="#53535b" stroke-width="1"/></svg>
<div class="a" style="left:184px;top:101px;width:8px;height:582px;background:#fcf5f4;"></div>
<div class="a" style="left:192px;top:101px;width:4px;height:582px;background:#f8f8f8;"></div>
<div class="a" style="left:222px;top:101px;width:1px;height:582px;background:#f4f4f4;"></div>
<div class="a" style="left:184px;top:123px;width:12px;height:228px;background-color:#fff;background-image:conic-gradient(#1d6db0 25%,#eaf4fb 0 50%,#1d6db0 0 75%,#eaf4fb 0);background-size:2px 2px;"></div>
<div class="a" style="left:224px;top:332px;width:780px;height:19px;background:#e8f2fe;"></div>
<span class="a m" style="left:205.5px;top:106px;font-size:15px;line-height:19px;color:#787878;">1</span>
<span class="a m" style="left:226px;top:106px;font-size:15px;line-height:19px;color:#7f0055;font-weight:700;">package</span>
<span class="a m" style="left:289px;top:106px;font-size:15px;line-height:19px;color:#000;"> main;</span>
<span class="a m" style="left:205.5px;top:125px;font-size:15px;line-height:19px;color:#787878;">2</span>
<span class="a m" style="left:226px;top:125px;font-size:15px;line-height:19px;color:#7f0055;font-weight:700;">public</span>
<span class="a m" style="left:280px;top:125px;font-size:15px;line-height:19px;color:#000;"> </span>
<span class="a m" style="left:289px;top:125px;font-size:15px;line-height:19px;color:#7f0055;font-weight:700;">class</span>
<span class="a m" style="left:334px;top:125px;font-size:15px;line-height:19px;color:#000;"> Circle {</span>
<span class="a m" style="left:205.5px;top:144px;font-size:15px;line-height:19px;color:#787878;">3</span>
<span class="a m" style="left:244px;top:144px;font-size:15px;line-height:19px;color:#7f0055;font-weight:700;">private</span>
<span class="a m" style="left:307px;top:144px;font-size:15px;line-height:19px;color:#000;"> </span>
<span class="a m" style="left:316px;top:144px;font-size:15px;line-height:19px;color:#7f0055;font-weight:700;">double</span>
<span class="a m" style="left:370px;top:144px;font-size:15px;line-height:19px;color:#000;"> </span>
<span class="a m" style="left:379px;top:144px;font-size:15px;line-height:19px;color:#0000c0;">radius</span>
<span class="a m" style="left:433px;top:144px;font-size:15px;line-height:19px;color:#000;"> = 1.0;</span>
<span class="a m" style="left:205.5px;top:163px;font-size:15px;line-height:19px;color:#787878;">4</span>
<span class="a m" style="left:205.5px;top:182px;font-size:15px;line-height:19px;color:#787878;">5</span>
<span class="a m" style="left:244px;top:182px;font-size:15px;line-height:19px;color:#7f0055;font-weight:700;">double</span>
<span class="a m" style="left:298px;top:182px;font-size:15px;line-height:19px;color:#000;"> getAre() {</span>
<span class="a m" style="left:205.5px;top:201px;font-size:15px;line-height:19px;color:#787878;">6</span>
<span class="a m" style="left:262px;top:201px;font-size:15px;line-height:19px;color:#7f0055;font-weight:700;">return</span>
<span class="a m" style="left:316px;top:201px;font-size:15px;line-height:19px;color:#000;"> </span>
<span class="a m" style="left:325px;top:201px;font-size:15px;line-height:19px;color:#0000c0;">radius</span>
<span class="a m" style="left:379px;top:201px;font-size:15px;line-height:19px;color:#000;"> * </span>
<span class="a m" style="left:406px;top:201px;font-size:15px;line-height:19px;color:#0000c0;">radius</span>
<span class="a m" style="left:460px;top:201px;font-size:15px;line-height:19px;color:#000;"> * Math.</span>
<span class="a m" style="left:532px;top:201px;font-size:15px;line-height:19px;color:#0000c0;font-weight:700;font-style:italic;">PI</span>
<span class="a m" style="left:550px;top:201px;font-size:15px;line-height:19px;color:#000;">;</span>
<span class="a m" style="left:205.5px;top:220px;font-size:15px;line-height:19px;color:#787878;">7</span>
<span class="a m" style="left:244px;top:220px;font-size:15px;line-height:19px;color:#000;">}</span>
<span class="a m" style="left:205.5px;top:239px;font-size:15px;line-height:19px;color:#787878;">8</span>
<span class="a m" style="left:205.5px;top:258px;font-size:15px;line-height:19px;color:#787878;">9</span>
<span class="a m" style="left:244px;top:258px;font-size:15px;line-height:19px;color:#7f0055;font-weight:700;">public</span>
<span class="a m" style="left:298px;top:258px;font-size:15px;line-height:19px;color:#000;"> </span>
<span class="a m" style="left:307px;top:258px;font-size:15px;line-height:19px;color:#7f0055;font-weight:700;">static</span>
<span class="a m" style="left:361px;top:258px;font-size:15px;line-height:19px;color:#000;"> </span>
<span class="a m" style="left:370px;top:258px;font-size:15px;line-height:19px;color:#7f0055;font-weight:700;">void</span>
<span class="a m" style="left:406px;top:258px;font-size:15px;line-height:19px;color:#000;"> main(String[] </span>
<span class="a m" style="left:541px;top:258px;font-size:15px;line-height:19px;color:#6a3e3e;">args</span>
<span class="a m" style="left:577px;top:258px;font-size:15px;line-height:19px;color:#000;">) {</span>
<span class="a m" style="left:196.5px;top:277px;font-size:15px;line-height:19px;color:#787878;">10</span>
<span class="a m" style="left:262px;top:277px;font-size:15px;line-height:19px;color:#000;">Circle </span>
<span class="a m" style="left:325px;top:277px;font-size:15px;line-height:19px;color:#6a3e3e;">myCircle</span>
<span class="a m" style="left:397px;top:277px;font-size:15px;line-height:19px;color:#000;"> = </span>
<span class="a m" style="left:424px;top:277px;font-size:15px;line-height:19px;color:#7f0055;font-weight:700;">new</span>
<span class="a m" style="left:451px;top:277px;font-size:15px;line-height:19px;color:#000;"> Circle();</span>
<span class="a m" style="left:196.5px;top:296px;font-size:15px;line-height:19px;color:#787878;">11</span>
<span class="a m" style="left:262px;top:296px;font-size:15px;line-height:19px;color:#000;">System.</span>
<span class="a m" style="left:325px;top:296px;font-size:15px;line-height:19px;color:#0000c0;font-weight:700;font-style:italic;">out</span>
<span class="a m" style="left:352px;top:296px;font-size:15px;line-height:19px;color:#000;">.println(</span>
<span class="a m" style="left:433px;top:296px;font-size:15px;line-height:19px;color:#2a00ff;">&quot;radius is &quot;</span>
<span class="a m" style="left:541px;top:296px;font-size:15px;line-height:19px;color:#000;"> + </span>
<span class="a m" style="left:568px;top:296px;font-size:15px;line-height:19px;color:#6a3e3e;">myCircle</span>
<span class="a m" style="left:640px;top:296px;font-size:15px;line-height:19px;color:#000;">.</span>
<span class="a m" style="left:649px;top:296px;font-size:15px;line-height:19px;color:#0000c0;">radius</span>
<span class="a m" style="left:703px;top:296px;font-size:15px;line-height:19px;color:#000;">);</span>
<span class="a m" style="left:196.5px;top:315px;font-size:15px;line-height:19px;color:#787878;">12</span>
<span class="a m" style="left:244px;top:315px;font-size:15px;line-height:19px;color:#000;">}</span>
<span class="a m" style="left:196.5px;top:334px;font-size:15px;line-height:19px;color:#787878;">13</span>
<span class="a m" style="left:226px;top:334px;font-size:15px;line-height:19px;color:#000;">}</span>
<svg class="a" style="left:214.2px;top:183.8px;" width="9" height="9" viewBox="0 0 9 9"><circle cx="4.500" cy="4.500" r="3.800" fill="#fdfeff" stroke="#a4b0c2" stroke-width="1"/><path d="M2.300 4.500h4.400" stroke="#59616c" stroke-width="1.100"/></svg>
<svg class="a" style="left:214.2px;top:259.8px;" width="9" height="9" viewBox="0 0 9 9"><circle cx="4.500" cy="4.500" r="3.800" fill="#fdfeff" stroke="#a4b0c2" stroke-width="1"/><path d="M2.300 4.500h4.400" stroke="#59616c" stroke-width="1.100"/></svg>
<div class="a" style="left:406px;top:123px;width:9px;height:19px;box-sizing:border-box;border:1px solid #471440;"></div>
<div class="a" style="left:1004px;top:101px;width:17px;height:582px;background:#f0f0f0;"></div>
<div class="a" style="left:1021px;top:101px;width:15px;height:582px;background:#fafafa;"></div>
<svg class="a" style="left:1008px;top:669px;" width="10" height="7" viewBox="0 0 10 7"><path d="M0.800 1l4.200 4.500 4.200-4.500" fill="none" stroke="#a8a8ac" stroke-width="1.500"/></svg>
<div class="a" style="left:224px;top:683px;width:780px;height:15px;background:#f0f0f0;"></div>
<div class="a" style="left:182px;top:683px;width:42px;height:15px;background:#fbfafa;"></div>
<div class="a" style="left:241px;top:683px;width:602px;height:15px;background:#cdcdcd;"></div>
<svg class="a" style="left:228px;top:686px;" width="8" height="10" viewBox="0 0 8 10"><path d="M6 0.800l-4.500 4.200 4.500 4.200" fill="none" stroke="#4e4e52" stroke-width="1.900"/></svg>
<svg class="a" style="left:992px;top:686px;" width="8" height="10" viewBox="0 0 8 10"><path d="M2 0.800l4.500 4.200-4.500 4.200" fill="none" stroke="#4e4e52" stroke-width="1.900"/></svg>
<div class="a" style="left:1004px;top:683px;width:32px;height:18px;background:#f4f4f6;border-radius:0 0 3px 0;"></div>
<div class="a" style="left:1040px;top:475.5px;width:287px;height:225.5px;background:#fff;border-radius:0 0 5px 5px;"></div>
<div class="a" style="left:1067px;top:475px;width:62px;height:5.5px;background:#d2d2d4;"></div>
<svg class="a" style="left:1083.5px;top:475.3px;" width="8" height="4" viewBox="0 0 8 4"><path d="M0 0.500l7 1.500-7 1.500z" fill="#3a6a4a"/></svg>
<svg class="a" style="left:1090.5px;top:488.5px;" width="6" height="6" viewBox="0 0 6 6"><rect x="0.800" y="0.800" width="4.200" height="4.200" fill="#fbeaea" stroke="#c0384a" stroke-width="1.200"/></svg>
<span class="a s" style="left:1112px;top:484px;font-size:12px;line-height:14px;color:#000;letter-spacing:0.469px;">radius</span>
<span class="a s" style="left:1151px;top:484px;font-size:12px;line-height:14px;color:#8c7b4f;letter-spacing:0.662px;">: double</span>
<svg class="a" style="left:1088px;top:508px;" width="10" height="8" viewBox="0 0 10 8"><path d="M5 0.300l4.700 7.400h-9.400z" fill="#3b6ea8" stroke="#2d5a90" stroke-width="0.500"/></svg>
<span class="a s" style="left:1112px;top:504px;font-size:12px;line-height:14px;color:#000;letter-spacing:0.393px;">getAre()</span>
<span class="a s" style="left:1162px;top:504px;font-size:12px;line-height:14px;color:#8c7b4f;letter-spacing:0.662px;">: double</span>
<svg class="a" style="left:1088px;top:527px;" width="10" height="10" viewBox="0 0 10 10"><circle cx="5" cy="5" r="4.300" fill="#4fa864" stroke="#2f7a44" stroke-width="0.900"/><circle cx="4.300" cy="4.200" r="1.800" fill="#7cc88c"/></svg>
<span class="a s" style="left:1101.2px;top:523px;font-size:9px;line-height:10px;color:#c2213a;">S</span>
<span class="a s" style="left:1112px;top:524px;font-size:12px;line-height:14px;color:#000;letter-spacing:0.391px;">main(String[])</span>
<span class="a s" style="left:1193px;top:524px;font-size:12px;line-height:14px;color:#8c7b4f;letter-spacing:0.635px;">: void</span>
<div class="a" style="left:726px;top:76px;width:600px;height:399.5px;border-radius:6px 6px 5px 5px;background:linear-gradient(90deg,#e8eaf7 0,#dcdff1 4px,#dcdff1 100%);box-shadow:0 0 0 1px #e9ecf8;"></div>
<div class="a" style="left:731px;top:77px;width:594px;height:394px;background:#fff;border-radius:4px 4px 2px 2px;box-shadow:0 0 0 1px #cfd3ea;"></div>
<div class="a" style="left:731px;top:77px;width:594px;height:25px;border-radius:4px 4px 0 0;background:linear-gradient(#d6e3f6,#c9daf3);"></div>
<div class="a" style="left:731px;top:77px;width:84px;height:25px;background:#fff;border-radius:4px 7px 0 0;"></div>
<svg class="a" style="left:736.2px;top:82.6px;" width="14.5" height="14.5" viewBox="0 0 16 16"><rect x="1.6" y="1.6" width="12.8" height="9.3" rx="1.3" fill="#eef2fb" stroke="#33589b" stroke-width="2.2"/><path d="M4.500 5h6.500M4.500 7.500h4.500" stroke="#2a4a88" stroke-width="1.3"/><path d="M6.500 11.500h3v1.700h3.300v1.600h-9.600v-1.600h3.300z" fill="#33589b"/></svg>
<span class="a k" style="left:754.50px;top:84.20px;letter-spacing:-0.4px;">控制台</span>
<svg class="a" style="left:795px;top:82.8px;" width="16" height="16" viewBox="0 0 16 16"><path d="M3 3.500l2-1.500 3 3.200 3-3.200 2 1.500-3.200 3.500 3.200 3.500-2 1.500-3-3.200-3 3.200-2-1.500 3.200-3.500z" fill="#fff" stroke="#53535b" stroke-width="1"/></svg>
<svg class="a" style="left:996px;top:81px;" width="16" height="16" viewBox="0 0 16 16"><rect x="3" y="3.5" width="9.5" height="9.5" fill="#b8b8be" stroke="#a4a4ac"/><rect x="5" y="5.5" width="5.5" height="5.5" fill="#a6a6ae"/></svg>
<svg class="a" style="left:1018px;top:81px;" width="16" height="16" viewBox="0 0 16 16"><path d="M2 4l2.500-2 3.500 3.500 3.500-3.500 2.500 2-3.500 4 3.500 4-2.500 2-3.500-3.500-3.500 3.500-2.500-2 3.500-4z" fill="#77777f" stroke="#5c5c64" stroke-width="0.6"/></svg>
<svg class="a" style="left:1041px;top:81px;" width="16" height="16" viewBox="0 0 16 16"><path d="M1 3l2-1.500 2.500 2.500 2.500-2.500 2 1.500-2.500 3 2.500 3-2 1.500-2.500-2.500-2.500 2.500-2-1.500 2.500-3z" fill="#8a8a92" stroke="#66666e" stroke-width="0.6"/><path d="M5 8l2.200-1.800 3 3 3-3 2.200 1.800-3 3.500 3 3.500-2.200 1.800-3-3-3 3-2.200-1.800 3-3.500z" fill="#77777f" stroke="#55555d" stroke-width="0.6"/></svg>
<div class="a" style="left:1063px;top:80px;width:1px;height:19px;background:#8e96aa;"></div>
<svg class="a" style="left:1072px;top:81px;" width="16" height="16" viewBox="0 0 16 16"><path d="M1.500 0.500h7.500l3 3v10h-10.500z" fill="#fdfdf4" stroke="#8a8a7a" stroke-width="0.9"/><path d="M3.500 4h5M3.500 6h6M3.500 8h4M3.500 10h3" stroke="#b0b0a0"/><path d="M8.500 9l6 6M14.500 9l-6 6" stroke="#5a5a62" stroke-width="2"/></svg>
<svg class="a" style="left:1095px;top:81px;" width="16" height="16" viewBox="0 0 16 16"><path d="M6.500 0.500h8v14h-8z" fill="#fdfdf4" stroke="#8a8a7a" stroke-width="0.9"/><path d="M10 3h3M10 5.500h3M10 8h3M10 10.500h3" stroke="#4a4a52"/><rect x="0.8" y="8" width="7.5" height="6.5" fill="#f0b030" stroke="#a87410" stroke-width="0.9"/><path d="M2.500 8v-2.200c0-2.800 4-2.800 4 0v2.200" fill="none" stroke="#a87410" stroke-width="1.3"/></svg>
<svg class="a" style="left:1118px;top:81px;" width="16" height="16" viewBox="0 0 16 16"><path d="M0.500 0.500h8l2.500 2.500v10h-10.500z" fill="#fdfdf4" stroke="#a8a89a" stroke-width="0.9"/><path d="M2.500 4h5M2.500 6.500h4M2.500 9h4" stroke="#c0c0b0"/><path d="M8 5h5.500v5.500h-4" fill="none" stroke="#e0b030" stroke-width="1.6"/><path d="M10.500 8l-3 2.500 3 2.500z" fill="#e0b030"/><path d="M12 12.500h3.500v2h-3.500z" fill="#d8d8c8"/></svg>
<div class="a" style="left:1138px;top:79px;width:46px;height:19px;background:#a9cdf5;"></div>
<div class="a" style="left:1160.5px;top:79px;width:1px;height:19px;background:#b6d4f6;"></div>
<svg class="a" style="left:1142.5px;top:81.5px;" width="16" height="16" viewBox="0 0 16 16"><rect x="3.5" y="0.5" width="11" height="8" rx="1" fill="#fff" stroke="#4a5a8a" stroke-width="1"/><path d="M6 3.500h6M6 5.500h5" stroke="#6a7aaa"/><rect x="0.5" y="7.5" width="7" height="5" rx="0.8" fill="#e6ecfa" stroke="#4a5a8a" stroke-width="1"/><path d="M2.500 14.500h4" stroke="#4a5a8a" stroke-width="1.2"/><path d="M8.500 8.500l2 2" stroke="#4a5a8a"/></svg>
<svg class="a" style="left:1165.5px;top:81.5px;" width="16" height="16" viewBox="0 0 16 16"><rect x="3.5" y="0.5" width="11" height="8" rx="1" fill="#fff" stroke="#4a5a8a" stroke-width="1"/><path d="M7.500 2.500l3.500 4M11 2.500l-3.500 4" stroke="#d8282c" stroke-width="1.5"/><path d="M12 3.500h1.500M12 5.500h1.500" stroke="#d8282c"/><rect x="0.5" y="7.5" width="7" height="5" rx="0.8" fill="#e6ecfa" stroke="#4a5a8a" stroke-width="1"/><path d="M2.500 14.500h4" stroke="#4a5a8a" stroke-width="1.2"/></svg>
<div class="a" style="left:1187px;top:80px;width:1px;height:19px;background:#6e7890;"></div>
<svg class="a" style="left:1196px;top:81px;" width="16" height="16" viewBox="0 0 16 16"><rect x="0.5" y="5.5" width="13" height="9" fill="#fff" stroke="#3e5a9a" stroke-width="1"/><rect x="0.5" y="5.5" width="13" height="2.5" fill="#3e62a8"/><path d="M8 6.500l5.500-5 2 2-5 5.500z" fill="#2f9a4a" stroke="#1a6a2e" stroke-width="0.8"/><path d="M8.500 8.500l-2.500 2.500" stroke="#1a4a2a" stroke-width="1.2"/></svg>
<svg class="a" style="left:1220px;top:81px;" width="16" height="16" viewBox="0 0 16 16"><rect x="1.5" y="1.8" width="12" height="8.8" rx="1" fill="#f4f4f0" stroke="#8c8c94" stroke-width="1.6"/><path d="M4.500 5h5M4.500 7.300h3.500" stroke="#a8a8a0" stroke-width="1.1"/><path d="M6 11.500h3v1.500h2v1.200h-7v-1.200h2z" fill="#8c8c94"/></svg>
<svg class="a" style="left:1242.5px;top:86.5px;" width="8" height="4" viewBox="0 0 8 4"><path d="M0 0h8l-4 4z" fill="#70747e"/></svg>
<svg class="a" style="left:1259px;top:81px;" width="16" height="16" viewBox="0 0 16 16"><rect x="0.5" y="4.5" width="12.5" height="10" fill="#fff" stroke="#4a4a5a" stroke-width="1"/><rect x="0.5" y="4.5" width="12.5" height="2.5" fill="#3e62a8"/><path d="M12 0.300l1 2.100 2.400 0.300-1.700 1.700 0.400 2.400-2.100-1.200-2.100 1.200 0.400-2.400-1.700-1.700 2.400-0.300z" fill="#ffe25a" stroke="#c8a21a" stroke-width="0.7"/></svg>
<svg class="a" style="left:1282.5px;top:86.5px;" width="8" height="4" viewBox="0 0 8 4"><path d="M0 0h8l-4 4z" fill="#14141c"/></svg>
<svg class="a" style="left:1300px;top:83px;" width="10" height="9" viewBox="0 0 10 9"><rect x="2.500" y="0.500" width="6.500" height="5" fill="#fff" stroke="#3c3c44"/><rect x="0.500" y="3.500" width="6.500" height="5" fill="#fff" stroke="#3c3c44"/><path d="M0.500 4.500h6.500M2.500 1.500h6.500" stroke="#3c3c44"/></svg>
<span class="a s" style="left:734.5px;top:106px;font-size:12px;line-height:14px;color:#000;letter-spacing:0.484px;">&lt;</span>
<span class="a k" style="left:742.20px;top:106.60px;">已终止</span>
<span class="a s" style="left:778.8px;top:106px;font-size:12px;line-height:14px;color:#000;letter-spacing:0.484px;">&gt;</span>
<span class="a s" style="left:791.2px;top:106px;font-size:12px;line-height:14px;color:#000;letter-spacing:0.155px;">Circle</span>
<span class="a s" style="left:827.5px;top:106px;font-size:12px;line-height:14px;color:#000;letter-spacing:-0.138px;">[Java</span>
<span class="a k" style="left:859.70px;top:106.60px;letter-spacing:-1px;">应用程序</span>
<span class="a s" style="left:907.2px;top:106px;font-size:12px;line-height:14px;color:#000;">]</span>
<span class="a s" style="left:916px;top:106px;font-size:12px;line-height:14px;color:#000;letter-spacing:0.544px;">C:\Program</span>
<span class="a s" style="left:987.5px;top:106px;font-size:12px;line-height:14px;color:#000;letter-spacing:0.382px;">Files\Java\jre-10.0.1\bin\javaw.exe</span>
<span class="a s" style="left:1191px;top:106px;font-size:12px;line-height:14px;color:#000;letter-spacing:0.259px;">(2018</span>
<span class="a k" style="left:1223.70px;top:106.60px;">年</span>
<span class="a s" style="left:1237.6px;top:106px;font-size:12px;line-height:14px;color:#000;letter-spacing:-0.680px;">10</span>
<span class="a k" style="left:1249.50px;top:106.60px;">月</span>
<span class="a s" style="left:1262.2px;top:106px;font-size:12px;line-height:14px;color:#000;letter-spacing:-0.530px;">21</span>
<span class="a k" style="left:1275.10px;top:106.60px;">日</span>
<span class="a k" style="left:1292.70px;top:106.60px;letter-spacing:-0.1px;">上午</span>
<span class="a s" style="left:1317.6px;top:106px;font-size:12px;line-height:14px;color:#000;">1</span>
<div class="a" style="left:732px;top:121px;width:591px;height:1px;background:#a0a0a0;"></div>
<span class="a m" style="left:735.3px;top:125px;font-size:15px;line-height:19px;color:#000;">radius is 1.0</span>
<div class="a" style="left:735px;top:123px;width:1px;height:18px;background:#000;"></div>
<div class="a" style="left:1306px;top:123px;width:16px;height:346px;background:#f0f0f0;"></div>
<svg class="a" style="left:1310px;top:129px;" width="10" height="7" viewBox="0 0 10 7"><path d="M0.800 6l4.200-4.500 4.200 4.500" fill="none" stroke="#b4b4b8" stroke-width="1.500"/></svg>
<svg class="a" style="left:1310px;top:440px;" width="10" height="7" viewBox="0 0 10 7"><path d="M0.800 1l4.200 4.500 4.200-4.500" fill="none" stroke="#b4b4b8" stroke-width="1.500"/></svg>
<div class="a" style="left:734px;top:453px;width:588px;height:15.6px;background:#f0f0f0;"></div>
<svg class="a" style="left:737.5px;top:456px;" width="7" height="9" viewBox="0 0 7 9"><path d="M5.200 0.800l-3.800 3.700 3.800 3.700" fill="none" stroke="#a8a8ac" stroke-width="1.500"/></svg>
<svg class="a" style="left:1294.5px;top:456px;" width="7" height="9" viewBox="0 0 7 9"><path d="M1.800 0.800l3.800 3.700-3.800 3.700" fill="none" stroke="#a8a8ac" stroke-width="1.500"/></svg>
<div class="a" style="left:1328px;top:77px;width:31px;height:58px;background:#e4e9f8;box-sizing:border-box;border:1px solid #f4f6fd;border-radius:5px;box-shadow:0 0 0 1px #d5dbee;"></div>
<div class="a" style="left:1335px;top:83px;width:2px;height:1.5px;background:#a0a6ba;"></div>
<div class="a" style="left:1340px;top:83px;width:2px;height:1.5px;background:#a0a6ba;"></div>
<div class="a" style="left:1344px;top:83px;width:2px;height:1.5px;background:#a0a6ba;"></div>
<div class="a" style="left:1349px;top:83px;width:2px;height:1.5px;background:#a0a6ba;"></div>
<svg class="a" style="left:1338.5px;top:93px;" width="10" height="9" viewBox="0 0 10 9"><rect x="2.500" y="0.500" width="6.500" height="5" fill="#fff" stroke="#3c3c44"/><rect x="0.500" y="3.500" width="6.500" height="5" fill="#fff" stroke="#3c3c44"/><path d="M0.500 4.500h6.500M2.500 1.500h6.500" stroke="#3c3c44"/></svg>
<div class="a" style="left:1332px;top:108px;width:23px;height:21px;background:#bcd6f8;"></div>
<svg class="a" style="left:1337.5px;top:112px;" width="14" height="14" viewBox="0 0 16 16"><rect x="1.6" y="1.6" width="12.8" height="9.3" rx="1.3" fill="#e8eef8" stroke="#1f3a6a" stroke-width="2.2"/><path d="M4.500 5h6.500M4.500 7.500h4.500" stroke="#1f3a6a" stroke-width="1.3"/><path d="M6.500 11.500h3v1.700h3.300v1.600h-9.600v-1.600h3.300z" fill="#1f3a6a"/></svg>
<svg class="a" style="left:1047px;top:707px;" width="2" height="22" viewBox="0 0 2 22"><rect x="0" y="0.00" width="2" height="2" rx="0.5" fill="#989cae"/><rect x="0" y="4.30" width="2" height="2" rx="0.5" fill="#989cae"/><rect x="0" y="8.60" width="2" height="2" rx="0.5" fill="#989cae"/><rect x="0" y="12.90" width="2" height="2" rx="0.5" fill="#989cae"/><rect x="0" y="17.20" width="2" height="2" rx="0.5" fill="#989cae"/></svg>
<svg class="a" style="left:1332.5px;top:707px;" width="2" height="22" viewBox="0 0 2 22"><rect x="0" y="0.00" width="2" height="2" rx="0.5" fill="#989cae"/><rect x="0" y="4.30" width="2" height="2" rx="0.5" fill="#989cae"/><rect x="0" y="8.60" width="2" height="2" rx="0.5" fill="#989cae"/><rect x="0" y="12.90" width="2" height="2" rx="0.5" fill="#989cae"/><rect x="0" y="17.20" width="2" height="2" rx="0.5" fill="#989cae"/></svg>
<svg class="a" style="left:1343px;top:707px;" width="11" height="17" viewBox="0 0 11 17"><path d="M5.500 0.800c3 0 4.700 2.200 4.700 4.500 0 2-1.200 3-1.900 4.200v1.800h-5.600v-1.800c-0.700-1.200-1.900-2.200-1.900-4.200 0-2.300 1.700-4.500 4.700-4.500z" fill="#ffe27a" stroke="#e0a82a" stroke-width="0.900"/><path d="M3.300 12h4.400v2.500l-1 1.500h-2.400l-1-1.500z" fill="#5a5a6a"/><path d="M3.800 13.200h3.400" stroke="#d8d8e0" stroke-width="0.800"/><circle cx="4.200" cy="4.200" r="1.500" fill="#fff6c8"/></svg>
</body></html>
